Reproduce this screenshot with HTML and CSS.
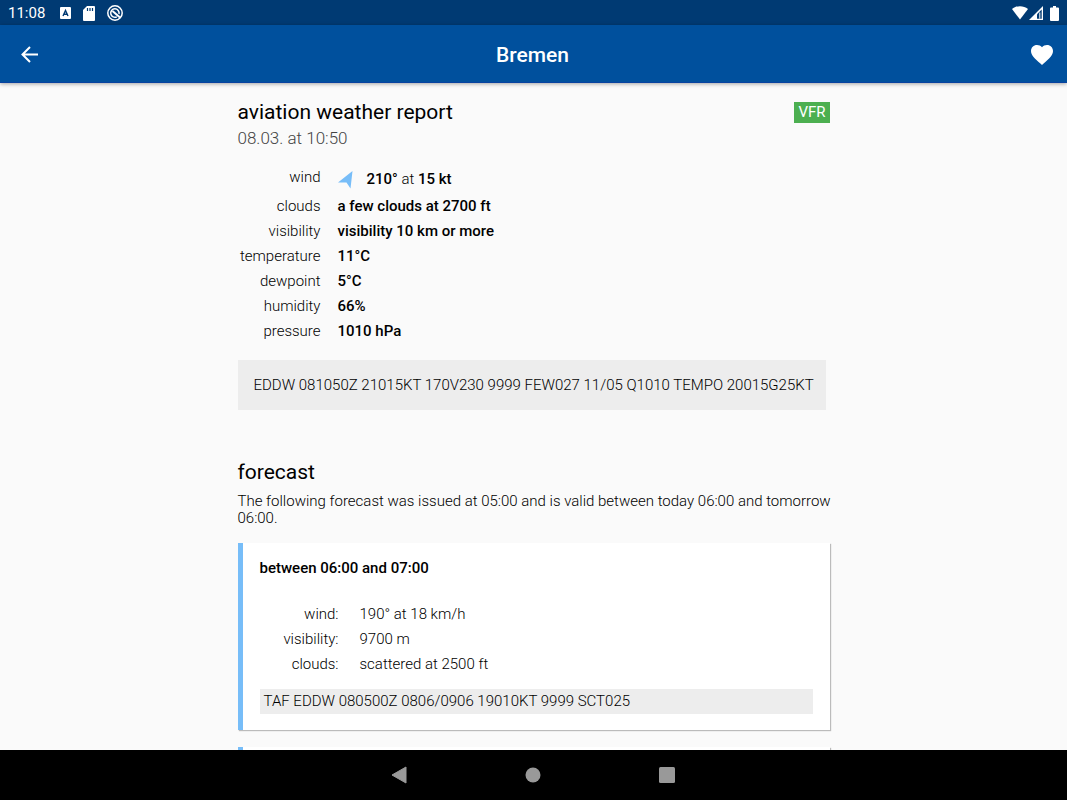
FILE: index.html
```html
<!DOCTYPE html>
<html lang="en">
<head>
<meta charset="utf-8">
<meta name="viewport" content="width=device-width, initial-scale=1">
<title>Bremen</title>
<link rel="stylesheet" href="styles.css">
</head>
<body>
<div class="statusbar">
  <span class="clock">11:08</span>
  <div class="notifications">
    <svg width="11" height="12" viewBox="0 0 11 12"><rect width="11" height="12" rx="1" fill="#fff"/><path d="M3 9 5.500 3.500 8 9M4 7.200h3" fill="none" stroke="#003a73" stroke-width="1.400"/></svg>
    <svg width="12" height="15" viewBox="0 0 12 15"><path d="M4 0h7a1 1 0 0 1 1 1v13a1 1 0 0 1-1 1H1a1 1 0 0 1-1-1V4z" fill="#fff"/><path d="M4.500 2v3M7 2v3M9.500 2v3" stroke="#003a73" stroke-width="1.200"/></svg>
    <svg width="16" height="16" viewBox="0 0 16 16" fill="none" stroke="#fff"><circle cx="8" cy="8" r="7.200" stroke-width="1.500"/><path d="M9.800 11.800A4.200 4.200 0 1 1 12 9" stroke-width="1.500"/><path d="M5.500 6 13 12.500" stroke-width="2"/></svg>
  </div>
  <div class="signals">
    <svg width="16" height="14" viewBox="0 0 16 14"><path d="M0 3C4.500-.8 11.500-.8 16 3L8 13.500z" fill="#fff"/></svg>
    <svg width="14" height="14" viewBox="0 0 14 14"><path d="M0 14 14 0v14z" fill="#fff"/><path d="M8 8.200 12.700 3.500v9.200H8z" fill="#003a73"/><path d="M3.500 12.700 8 8.200v4.500z" fill="#fff"/><path d="M10.800 6.500V12.700" stroke="#fff"/></svg>
    <svg class="battery" width="9" height="15" viewBox="0 0 9 15"><path d="M3 0h3v1.500h2a1 1 0 0 1 1 1V14a1 1 0 0 1-1 1H1a1 1 0 0 1-1-1V2.500a1 1 0 0 1 1-1h2z" fill="#fff"/></svg>
  </div>
</div>
<header class="appbar">
  <button class="icon-button" aria-label="Back"><svg width="17" height="17" viewBox="0 0 17 17" fill="none" stroke="#fff" stroke-width="2"><path d="M17 8.500H2M9 1 1.500 8.500 9 16"/></svg></button>
  <h1 class="title">Bremen</h1>
  <button class="icon-button" aria-label="Favourite"><svg width="22" height="20" viewBox="0 0 22 20"><path d="M11 20 9.400 18.600C3.700 13.500 0 10.100 0 6 0 2.600 2.600 0 6 0c1.900 0 3.800.9 5 2.300C12.200.9 14.100 0 16 0c3.400 0 6 2.600 6 6 0 4.100-3.700 7.500-9.400 12.600z" fill="#fff"/></svg></button>
</header>
<main class="page">
  <section class="content">
    <div class="report-head">
      <h2 class="heading">aviation weather report</h2>
      <span class="badge">VFR</span>
    </div>
    <p class="issued">08.03. at 10:50</p>
    <table class="facts">
      <tr><th scope="row">wind</th><td><div class="wind"><svg width="15" height="18" viewBox="0 0 15 18"><path d="M14.500 0 12.500 17.500 8.500 11.500 0 11.500z" fill="#77bdf8"/></svg><span><b>210°</b> at <b>15 kt</b></span></div></td></tr>
      <tr><th scope="row">clouds</th><td><b>a few clouds at 2700 ft</b></td></tr>
      <tr><th scope="row">visibility</th><td><b>visibility 10 km or more</b></td></tr>
      <tr><th scope="row">temperature</th><td><b>11°C</b></td></tr>
      <tr><th scope="row">dewpoint</th><td><b>5°C</b></td></tr>
      <tr><th scope="row">humidity</th><td><b>66%</b></td></tr>
      <tr><th scope="row">pressure</th><td><b>1010 hPa</b></td></tr>
    </table>
    <p class="metar">EDDW 081050Z 21015KT 170V230 9999 FEW027 11/05 Q1010 TEMPO 20015G25KT</p>
    <h2 class="heading">forecast</h2>
    <p class="intro">The following forecast was issued at 05:00 and is valid between today 06:00 and tomorrow 06:00.</p>
    <article class="card">
      <h3 class="period">between 06:00 and 07:00</h3>
      <table class="facts">
        <tr><th scope="row">wind:</th><td>190° at 18 km/h</td></tr>
        <tr><th scope="row">visibility:</th><td>9700 m</td></tr>
        <tr><th scope="row">clouds:</th><td>scattered at 2500 ft</td></tr>
      </table>
      <p class="taf">TAF EDDW 080500Z 0806/0906 19010KT 9999 SCT025</p>
    </article>
    <article class="card"></article>
  </section>
</main>
<nav class="navbar">
  <button class="nav-button" aria-label="Back"><svg width="16" height="18" viewBox="0 0 16 18"><path d="M15 1v16L1 9z" fill="#999" stroke="#999" stroke-linejoin="round"/></svg></button>
  <button class="nav-button" aria-label="Home"><svg width="16" height="16" viewBox="0 0 16 16"><circle cx="8" cy="8" r="7.500" fill="#999"/></svg></button>
  <button class="nav-button" aria-label="Recent apps"><svg width="16" height="16" viewBox="0 0 16 16"><rect width="16" height="16" rx="1.500" fill="#999"/></svg></button>
</nav>
</body>
</html>
```
FILE: styles.css
```css
* { box-sizing: border-box; }
body {
  margin: 0;
  height: 100vh;
  display: flex;
  flex-direction: column;
  overflow: hidden;
  background: #fafafa;
  color: #000;
  font: 300 15px/17px Roboto, sans-serif;
}
h1, h2, h3, p { margin: 0; font-weight: 300; }
b { font-weight: 500; }
svg { display: block; }
button { border: 0; padding: 0; background: none; cursor: pointer; }

.statusbar {
  display: flex;
  align-items: center;
  flex: none;
  height: 25px;
  padding: 1px 8px 0;
  background: #003a73;
  color: #fff;
}
.clock { font-weight: 400; margin-right: 15px; }
.notifications { display: flex; align-items: center; gap: 12px; }
.signals { display: flex; align-items: center; gap: 1px; margin-left: auto; }
.battery { margin-left: 6px; }

.appbar {
  display: flex;
  align-items: center;
  justify-content: space-between;
  flex: none;
  height: 58px;
  padding: 2px 14px 0 12px;
  background: #00509d;
  border-bottom: 1px solid #0842a0;
  box-shadow: 0 1px 4px rgba(0, 0, 0, .35);
  z-index: 1;
}
.icon-button { display: grid; place-items: center; width: 34px; height: 40px; }
.icon-button:last-child { justify-items: end; }
.title { color: #fff; font-size: 21px; line-height: 24px; font-weight: 500; }

.page { flex: 1; min-height: 0; overflow: hidden; padding: 17px; }
.content { max-width: 592px; margin: 0 auto; }
.report-head { display: flex; justify-content: space-between; align-items: center; }
.heading { font-size: 21px; line-height: 25px; font-weight: 400; }
.badge {
  padding: 2px 4px;
  background: #4caf50;
  color: #fff;
  font-weight: 400;
}
.issued { margin-top: 3px; font-size: 17px; line-height: 20px; color: #444; }

.facts { border-collapse: collapse; margin-top: 17px; }
.facts th, .facts td { padding: 4px 0; vertical-align: top; }
.facts th { width: 83px; text-align: right; font-weight: 300; }
.facts td { padding-left: 17px; }
.wind { display: flex; align-items: center; gap: 14px; height: 21px; }

.metar {
  width: fit-content;
  margin: 16px 0 50px;
  padding: 16px 12px 16px 16px;
  line-height: 18px;
  background: #ededed;
}
.intro { margin: 8px -8px 16px 0; }

.card {
  min-height: 40px;
  margin-bottom: 17px;
  padding: 17px 17px 16px;
  border-left: 5px solid #77bdf8;
  background: #fff;
  box-shadow: 1px 1px 1px rgba(0, 0, 0, .25);
}
.period { font-size: 15px; line-height: 17px; font-weight: 500; }
.card .facts { margin: 25px 0 12px; }
.card .facts th { width: 79px; }
.card .facts td { padding-left: 21px; }
.taf { padding: 4px; background: #ededed; }

.navbar {
  display: flex;
  justify-content: center;
  align-items: center;
  flex: none;
  gap: 94px;
  height: 50px;
  padding-right: 2px;
  background: #000;
  z-index: 1;
}
.nav-button { display: grid; place-items: center; width: 40px; height: 40px; }
```
